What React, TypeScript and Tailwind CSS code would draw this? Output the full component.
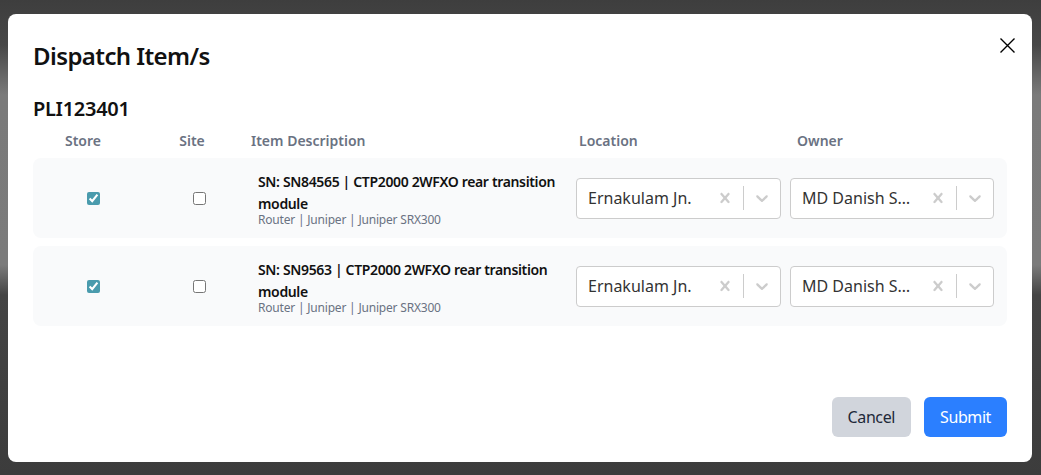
import React from "react";

type Item = {
  sn: string;
  name: string;
  meta: string;
  location: string;
  owner: string;
};

const items: Item[] = [
  {
    sn: "SN84565",
    name: "CTP2000 2WFXO rear transition module",
    meta: "Router | Juniper | Juniper SRX300",
    location: "Ernakulam Jn.",
    owner: "MD Danish Shaikh",
  },
  {
    sn: "SN9563",
    name: "CTP2000 2WFXO rear transition module",
    meta: "Router | Juniper | Juniper SRX300",
    location: "Ernakulam Jn.",
    owner: "MD Danish Shaikh",
  },
];

function SelectBox({ value, width }: { value: string; width: string }) {
  return (
    <div className={`${width} h-[41px] flex items-center bg-white border border-[#cccccc] rounded`}>
      <div className="flex-1 min-w-0 pl-[11px] pr-2 text-base text-[#333333] truncate">{value}</div>
      <div className="flex items-center h-full">
        <div className="w-9 h-full flex items-center justify-center text-[#cccccc]">
          <svg width="20" height="20" viewBox="0 0 20 20" fill="currentColor">
            <path d="M14.348 14.849c-0.469 0.469-1.229 0.469-1.697 0l-2.651-3.030-2.651 3.029c-0.469 0.469-1.229 0.469-1.697 0-0.469-0.469-0.469-1.229 0-1.697l2.758-3.15-2.759-3.152c-0.469-0.469-0.469-1.228 0-1.697s1.228-0.469 1.697 0l2.652 3.031 2.651-3.031c0.469-0.469 1.228-0.469 1.697 0s0.469 1.229 0 1.697l-2.758 3.152 2.758 3.15c0.469 0.469 0.469 1.229 0 1.698z" />
          </svg>
        </div>
        <div className="w-px h-6 bg-[#cccccc]" />
        <div className="w-9 h-full flex items-center justify-center text-[#cccccc]">
          <svg width="20" height="20" viewBox="0 0 20 20" fill="currentColor">
            <path d="M4.516 7.548c0.436-0.446 1.043-0.481 1.576 0l3.908 3.747 3.908-3.747c0.533-0.481 1.141-0.446 1.574 0 0.436 0.445 0.408 1.197 0 1.615-0.406 0.418-4.695 4.502-4.695 4.502-0.217 0.223-0.502 0.335-0.787 0.335s-0.57-0.112-0.789-0.335c0 0-4.287-4.084-4.695-4.502s-0.436-1.170 0-1.615z" />
          </svg>
        </div>
      </div>
    </div>
  );
}

export default function App() {
  return (
    <div
      className="w-[1041px] h-[475px] pt-[14px] pl-2 bg-[linear-gradient(to_bottom,#3e3e3e_0px,#474747_45px,#7a7a7a_95px,#7b7b7b_265px,#444444_295px,#3c3c3c_100%)]"
      style={{ fontFamily: '"Noto Sans", "Open Sans", sans-serif' }}
    >
      <div className="w-[1024px] h-[448px] bg-white rounded-lg px-[25px] pt-[26px] pb-[25px] flex flex-col">
        <div className="flex items-start justify-between">
          <h2 className="text-2xl leading-8 font-semibold text-[#111111] tracking-[-0.6px]">Dispatch Item/s</h2>
          <button className="mt-[-2px] mr-[-8px] text-black">
            <svg width="15" height="15" viewBox="0 0 15 15" fill="none" stroke="currentColor" strokeWidth="1.4">
              <path d="M0.5 0.5L14.5 14.5M14.5 0.5L0.5 14.5" />
            </svg>
          </button>
        </div>

        <h3 className="mt-[23px] text-xl leading-7 font-semibold text-[#111111] tracking-[-0.3px]">PLI123401</h3>

        <div className="mt-2 flex text-sm leading-5 font-semibold text-gray-500">
          <div className="w-[100px] text-center">Store</div>
          <div className="w-[118px] text-center">Site</div>
          <div className="w-[328px]">Item Description</div>
          <div className="w-[218px]">Location</div>
          <div>Owner</div>
        </div>

        <div className="mt-[7px] flex flex-col gap-2">
          {items.map((item) => (
            <div key={item.sn} className="h-20 flex items-center px-3 bg-gray-50 rounded-lg">
              <div className="w-[96px] flex justify-center">
                <input type="checkbox" defaultChecked className="w-[13px] h-[13px] accent-[#4a9bad]" />
              </div>
              <div className="w-[116px] flex justify-center">
                <input type="checkbox" className="w-[13px] h-[13px]" />
              </div>
              <div className="w-[319px] pl-px pr-1">
                <div className="text-sm leading-[22px] font-semibold text-[#111111] tracking-[-0.35px]">
                  SN: {item.sn} | {item.name}
                </div>
                <div className="mt-[-1px] text-xs leading-3 text-gray-500 tracking-[-0.2px]">{item.meta}</div>
              </div>
              <SelectBox value={item.location} width="w-[205px]" />
              <div className="ml-[9px]">
                <SelectBox value={item.owner} width="w-[204px]" />
              </div>
            </div>
          ))}
        </div>

        <div className="mt-auto flex justify-end gap-[13px]">
          <button className="px-4 py-2 text-base leading-6 rounded-md bg-gray-300 text-gray-800 tracking-[-0.4px]">Cancel</button>
          <button className="px-4 py-2 text-base leading-6 rounded-md bg-blue-500 text-white tracking-[-0.4px]">Submit</button>
        </div>
      </div>
    </div>
  );
}
